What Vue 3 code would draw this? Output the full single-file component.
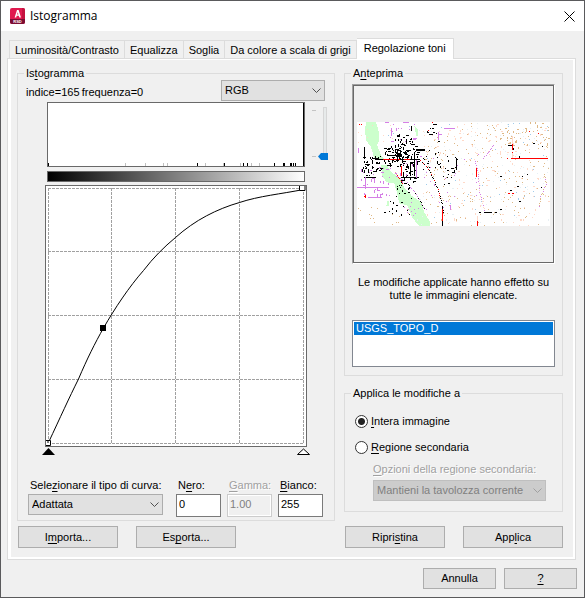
<script setup>
import { ref } from 'vue'

const tabs = ['Luminosità/Contrasto', 'Equalizza', 'Soglia', 'Da colore a scala di grigi', 'Regolazione toni']
const activeTab = ref('Regolazione toni')
const channel = ref('RGB')
const curveType = ref('Adattata')
const black = ref('0')
const gamma = ref('1.00')
const white = ref('255')
const scale = ref(0)
const scope = ref('all')
const palette = ref('Mantieni la tavolozza corrente')

const blackBars = [1, 150, 177, 196, 200, 227, 236, 237, 243, 244, 246, 248]
const grayBars = [77, 97, 115, 119, 157, 175, 192, 195, 203, 211]
const gridLines = [3, 66, 130, 194, 258]

/* Deterministic generator so that the thumbnail is stable between renders */
let seed = 4711
function random() {
  seed = (seed * 16807) % 2147483647
  return seed / 2147483647
}

const colors = {
  black: '#000000',
  red: '#ff0000',
  purple: '#d580e6',
  tan: '#deb887',
  peach: '#ffd9c8',
  blue: '#a0cbea',
  pale: '#e8f0f4',
  green: '#ccffcc'
}

const marks = []
function scatter(color, count, x, y, w, h, longest = 1) {
  for (let i = 0; i < count; i++) {
    const flat = random() > 0.5
    const length = 1 + Math.floor(random() * longest)
    marks.push({
      color,
      x: x + Math.floor(random() * w),
      y: y + Math.floor(random() * h),
      w: flat ? length : 1,
      h: flat ? 1 : length
    })
  }
}
function trail(names, points, step) {
  for (let p = 1; p < points.length; p++) {
    const [x0, y0] = points[p - 1]
    const [x1, y1] = points[p]
    const count = Math.ceil(Math.hypot(x1 - x0, y1 - y0) / step)
    for (let i = 0; i < count; i++) {
      marks.push({
        color: names[Math.floor(random() * names.length)],
        x: Math.round(x0 + ((x1 - x0) * i) / count),
        y: Math.round(y0 + ((y1 - y0) * i) / count),
        w: 1,
        h: 1
      })
    }
  }
}

scatter('pale', 130, 60, 0, 131, 103)
scatter('peach', 150, 66, 0, 125, 103, 2)
scatter('tan', 170, 68, 0, 123, 103)
scatter('tan', 44, 140, 0, 51, 26, 2)
scatter('tan', 22, 68, 20, 22, 36)
scatter('tan', 16, 0, 85, 60, 18)
scatter('peach', 14, 0, 0, 60, 30)
scatter('blue', 40, 68, 0, 122, 96)
scatter('blue', 5, 20, 0, 40, 40)
scatter('purple', 34, 4, 44, 30, 30, 3)
scatter('purple', 12, 32, 2, 28, 18, 3)
scatter('purple', 26, 62, 30, 60, 60)
scatter('purple', 10, 45, 76, 24, 20)
scatter('purple', 14, 36, 40, 26, 20, 2)
scatter('black', 95, 27, 24, 34, 22, 3)
scatter('black', 30, 35, 26, 14, 14, 3)
scatter('black', 26, 38, 12, 18, 14, 3)
scatter('black', 46, 5, 34, 20, 20, 3)
scatter('black', 34, 44, 42, 16, 20, 3)
scatter('black', 12, 70, 0, 14, 20, 2)
scatter('black', 20, 66, 28, 18, 20, 2)
scatter('black', 16, 86, 34, 14, 30, 2)
scatter('black', 14, 30, 74, 26, 20, 2)
scatter('black', 12, 40, 62, 14, 10, 2)
scatter('black', 12, 140, 20, 45, 80, 2)
trail(['black', 'red', 'black'], [[62, 37], [70, 45], [77, 58], [82, 71], [85, 83]], 2)
trail(['purple'], [[135, 23], [130, 30], [124, 37]], 2)
trail(['purple', 'peach'], [[116, 37], [120, 52], [121, 70], [127, 90]], 2)
trail(['black', 'tan'], [[85, 84], [87, 95]], 2)
trail(['black', 'purple'], [[50, 60], [60, 74], [68, 88]], 2)
trail(['tan', 'red'], [[38, 50], [46, 62]], 2)
trail(['tan', 'tan', 'purple'], [[186, 52], [188, 62], [182, 74], [181, 86]], 2)

const lines = [
  ['black', 18, 37, 44, 1], ['red', 26, 37, 17, 1], ['red', 47, 37, 6, 1], ['red', 44, 44, 1, 10],
  ['black', 7, 25, 1, 12], ['black', 59, 27, 9, 2], ['black', 50, 28, 4, 1], ['black', 54, 4, 1, 5],
  ['black', 44, 55, 18, 1], ['black', 7, 55, 12, 1], ['black', 30, 33, 12, 1],
  ['black', 40, 28, 1, 12], ['black', 57, 30, 1, 24], ['black', 53, 40, 1, 14], ['black', 98, 36, 1, 12],
  ['red', 153, 36, 37, 1], ['red', 149, 36, 1, 1], ['red', 154, 22, 1, 6], ['red', 154, 30, 1, 1],
  ['peach', 154, 14, 1, 8], ['peach', 154, 31, 1, 5], ['red', 118, 46, 1, 9], ['red', 119, 98, 1, 6],
  ['peach', 119, 94, 1, 4], ['red', 85, 87, 1, 11], ['black', 85, 98, 1, 6], ['black', 85, 85, 1, 2],
  ['red', 2, 2, 1, 1], ['red', 4, 2, 1, 1], ['red', 7, 74, 2, 1], ['red', 8, 73, 1, 3],
  ['red', 150, 71, 2, 1], ['red', 154, 71, 2, 1], ['red', 171, 9, 1, 1], ['red', 180, 11, 1, 1],
  ['red', 75, 0, 1, 1], ['red', 71, 8, 1, 1], ['black', 121, 90, 2, 1], ['black', 126, 90, 8, 1],
  ['black', 137, 90, 2, 1], ['black', 150, 23, 4, 1], ['black', 27, 90, 2, 1], ['black', 76, 2, 4, 1],
  ['purple', 0, 65, 27, 1], ['purple', 30, 65, 2, 1], ['purple', 11, 75, 14, 1], ['purple', 20, 72, 1, 3],
  ['purple', 59, 38, 1, 18], ['purple', 87, 6, 10, 1], ['purple', 34, 6, 1, 8], ['purple', 46, 0, 6, 1],
  ['purple', 28, 0, 4, 1], ['purple', 8, 55, 1, 12], ['purple', 17, 56, 1, 5], ['purple', 81, 10, 1, 8],
  ['purple', 56, 16, 3, 2], ['purple', 1, 26, 1, 5], ['purple', 93, 83, 1, 5], ['purple', 82, 12, 3, 1]
]
for (const [color, x, y, w, h] of lines) marks.push({ color, x, y, w, h })
</script>

<template>
  <main class="dialog">
    <header class="titlebar">
      <svg class="logo" viewBox="0 0 16 17" aria-hidden="true">
        <rect width="15" height="16" rx="2" fill="#e01a4f" />
        <path d="M0 11H15V14Q15 16 13 16H2Q0 16 0 14Z" fill="#7c0c32" />
        <path d="M12 0H13Q15 0 15 2V11H12Z" fill="#c4123f" />
        <path d="M4.600 9.500L7 2H8.600L11 9.500H9.300L8.800 7.800H6.700L6.200 9.500ZM7.100 6.500H8.400L7.800 4.200Z" fill="#fff" />
        <text x="7.500" y="15" text-anchor="middle" class="logo-text">RSD</text>
      </svg>
      <h1>Istogramma</h1>
      <button class="close" aria-label="Chiudi">
        <svg viewBox="0 0 11 11"><path d="M.5 .5L10.500 10.500M10.500 .5L.5 10.500" stroke="#000" fill="none" /></svg>
      </button>
    </header>

    <nav class="tabs" role="tablist">
      <button
        v-for="tab in tabs"
        :key="tab"
        role="tab"
        :aria-selected="tab === activeTab"
        :class="['tab', { active: tab === activeTab }]"
        @click="activeTab = tab"
      >{{ tab }}</button>
    </nav>

    <section class="panel">
      <div class="column">
        <fieldset class="group histogram">
          <legend>Is<u>t</u>ogramma</legend>
          <div class="head">
            <span>indice=165&thinsp;frequenza=0</span>
            <div class="select channel">
              <select v-model="channel" aria-label="Canale"><option>RGB</option></select>
              <svg viewBox="0 0 9 6"><path d="M.5 .5L4.500 4.500L8.500 .5" /></svg>
            </div>
          </div>
          <div class="levels">
            <svg class="bars" viewBox="0 0 256 63" preserveAspectRatio="none" shape-rendering="crispEdges">
              <rect v-for="x in grayBars" :key="'g' + x" :x="x" y="60" width="1" height="3" fill="#c0c0c0" />
              <rect v-for="x in blackBars" :key="'b' + x" :x="x - 1" y="60" width="1" height="3" fill="#000" />
              <rect x="255" y="0" width="1" height="63" fill="#000" />
            </svg>
            <div class="slider">
              <div class="ticks"><i></i><i></i></div>
              <input v-model="scale" type="range" min="0" max="100" aria-label="Scala istogramma" />
            </div>
          </div>
          <div class="ramp"></div>
          <svg class="curve" viewBox="0 0 262 272">
            <rect x=".5" y=".5" width="261" height="261" fill="#fff" stroke="#696969" />
            <g class="grid">
              <path v-for="p in gridLines" :key="p" :d="`M3 ${p}.5H259M${p}.5 3V259`" />
            </g>
            <path
              d="M3.500 257.500C15 233 24 213 33.500 194C42 174 50 158 58.500 143C70 123 84 102 98.500 85.500C108 73 119 62 130.500 52.500C150 35 172 24 194.500 17.500C214 11 236 9 258.500 4.500"
              fill="none" stroke="#000"
            />
            <rect x="55" y="140" width="6" height="6" />
            <path d="M1 255.500H5.500V260.500H1M254.500 1V5.500H260V1" fill="#fff" stroke="#000" />
            <path d="M3 256V258" stroke="#000" />
            <path d="M3.500 263L10 270H-3Z" />
            <path d="M258.500 264L264.500 269.500H252.500Z" fill="#fff" stroke="#000" />
          </svg>
          <div class="settings">
            <div class="field type">
              <label for="curve-type">Sele<u>z</u>ionare il tipo di curva:</label>
              <div class="select">
                <select id="curve-type" v-model="curveType"><option>Adattata</option></select>
                <svg viewBox="0 0 9 6"><path d="M.5 .5L4.500 4.500L8.500 .5" /></svg>
              </div>
            </div>
            <div class="field">
              <label for="black">N<u>e</u>ro:</label>
              <input id="black" v-model="black" type="text" />
            </div>
            <div class="field">
              <label for="gamma" class="off"><u>G</u>amma:</label>
              <input id="gamma" v-model="gamma" type="text" disabled />
            </div>
            <div class="field">
              <label for="white"><u>B</u>ianco:</label>
              <input id="white" v-model="white" type="text" />
            </div>
          </div>
        </fieldset>
        <div class="buttons">
          <button class="push">I<u>m</u>porta...</button>
          <button class="push">Es<u>p</u>orta...</button>
        </div>
      </div>

      <div class="column">
        <fieldset class="group preview">
          <legend>A<u>n</u>teprima</legend>
          <div class="frame">
            <svg class="map" viewBox="0 0 192 104" shape-rendering="crispEdges">
              <rect width="192" height="104" fill="#fff" />
              <g fill="#ccffcc">
                <path d="M9 0H19L22 11V18L20 23L24 33L27 37L17 36L14 25L9 18L8 8Z" />
                <path d="M24 43H30L34 50L42 55L47 65L54 73L64 80L67 90L73 100L72 104H62L55 95L50 83L42 81L40 71L37 61L29 60L25 53Z" />
                <path d="M57 4L61 8V14H59ZM30 79H32V84H29Z" />
              </g>
              <rect
                v-for="(m, i) in marks"
                :key="i"
                :x="m.x" :y="m.y" :width="m.w" :height="m.h"
                :fill="colors[m.color]"
              />
            </svg>
          </div>
          <p class="note">Le modifiche applicate hanno effetto su tutte le immagini elencate.</p>
          <ul class="list" role="listbox" aria-label="Immagini">
            <li role="option" aria-selected="true">USGS_TOPO_D</li>
          </ul>
        </fieldset>

        <fieldset class="group scope">
          <legend>Applica le modifiche a</legend>
          <label class="radio"><input v-model="scope" type="radio" name="scope" value="all" /><span><u>I</u>ntera immagine</span></label>
          <label class="radio"><input v-model="scope" type="radio" name="scope" value="part" /><span><u>R</u>egione secondaria</span></label>
          <div class="sub">
            <label for="palette" class="off"><u>O</u>pzioni della regione secondaria:</label>
            <div class="select disabled">
              <select id="palette" v-model="palette" disabled><option>Mantieni la tavolozza corrente</option></select>
              <svg viewBox="0 0 9 6"><path d="M.5 .5L4.500 4.500L8.500 .5" /></svg>
            </div>
          </div>
        </fieldset>
        <div class="buttons">
          <button class="push">Ripri<u>s</u>tina</button>
          <button class="push">App<u>l</u>ica</button>
        </div>
      </div>
    </section>

    <footer class="footer">
      <button class="push">Annulla</button>
      <button class="push"><u>?</u></button>
    </footer>
  </main>
</template>

<style>
body {
  background: #f0f0f0;
}
</style>

<style scoped>
.dialog,
.dialog * {
  box-sizing: border-box;
}
.dialog {
  display: flex;
  flex-direction: column;
  min-height: 100vh;
  border: 1px solid #5a5a5c;
  background: #f0f0f0;
  color: #000;
  font: 11px/13px "Liberation Sans", Arial, sans-serif;
}
button,
input,
select {
  margin: 0;
  border-radius: 0;
  color: inherit;
  font: inherit;
}
u {
  text-underline-offset: 2px;
  text-decoration-thickness: 1px;
  text-decoration-skip-ink: none;
}
.titlebar {
  display: flex;
  align-items: center;
  height: 30px;
  padding: 0 9px;
  background: #fff;
}
.logo {
  width: 16px;
  height: 17px;
}
.logo-text {
  fill: #fff;
  font: bold 4px "Liberation Sans", sans-serif;
}
h1 {
  flex: 1;
  margin: 0 0 0 4px;
  font: 12px/16px "Open Sans", "Noto Sans", sans-serif;
}
.close {
  display: flex;
  padding: 0;
  border: 0;
  background: none;
}
.close svg {
  width: 11px;
  height: 11px;
}
.tabs {
  display: flex;
  align-items: flex-end;
  margin: 7px 8px 0;
}
.tab {
  height: 18px;
  padding: 1px 5px 0;
  border: 1px solid #dcdcdc;
  border-width: 1px 1px 0 0;
  background: #f0f0f0;
  white-space: nowrap;
}
.tab:first-child {
  border-left-width: 1px;
}
.tab.active {
  position: relative;
  height: 21px;
  margin-bottom: -1px;
  padding: 0 7px 1px;
  background: #fff;
}
.panel {
  display: grid;
  grid-template-columns: 318fr 219fr;
  gap: 9px;
  margin: 0 8px 0 6px;
  padding: 8px 12px 11px 9px;
  border: 1px solid #dcdcdc;
  box-shadow: inset 3px 1px #fff, inset -2px -2px #fff;
}
.column {
  display: flex;
  flex-direction: column;
  min-width: 0;
}
.group {
  min-width: 0;
  margin: 0;
  padding: 0;
  border: 1px solid #dcdcdc;
}
legend {
  margin-left: 6px;
  padding: 0 2px;
}
.preview legend {
  margin-left: -1px;
}
.scope legend {
  margin-left: -4px;
}
.head {
  display: flex;
  justify-content: space-between;
  align-items: center;
  height: 21px;
  padding: 0 9px 0 8px;
}
.head span {
  padding-top: 4px;
}
.select {
  display: grid;
  align-items: center;
}
.select > * {
  grid-area: 1 / 1;
}
.select select {
  width: 100%;
  height: 21px;
  padding: 0 18px 0 3px;
  border: 1px solid #adadad;
  background: #e1e1e1;
  appearance: none;
}
.select svg {
  justify-self: end;
  width: 9px;
  height: 6px;
  margin-right: 4px;
  fill: none;
  stroke: #505050;
  pointer-events: none;
}
.channel {
  width: 104px;
}
.select.disabled select {
  border-color: #bfbfbf;
  background: #cccccc;
  color: #808080;
  opacity: 1;
}
.select.disabled svg {
  stroke: #a0a0a0;
}
.levels {
  display: grid;
  grid-template-columns: 1fr 29px;
  margin-top: 1px;
  padding-left: 29px;
}
.bars {
  width: 100%;
  height: 65px;
  border: 1px solid #696969;
  background: #fff;
}
.slider {
  display: flex;
  gap: 2px;
  padding: 5px 0 0 7px;
}
.ticks {
  display: flex;
  flex-direction: column;
  justify-content: space-between;
  width: 4px;
  height: 50px;
  padding-top: 3px;
}
.ticks i {
  height: 1px;
  background: #c4c4c4;
}
.slider input {
  width: 10px;
  height: 53px;
  background:
    linear-gradient(#e7eaea, #e7eaea) 6px 1px / 2px 48px no-repeat,
    linear-gradient(#d6d6d6, #d6d6d6) 5px 0 / 4px 50px no-repeat;
  appearance: none;
  writing-mode: vertical-lr;
  direction: rtl;
}
.slider input::-webkit-slider-thumb {
  width: 10px;
  height: 7px;
  background: #0078d7;
  appearance: none;
  clip-path: polygon(0 50%, 30% 0, 100% 0, 100% 100%, 30% 100%);
}
.ramp {
  height: 11px;
  margin: 4px 29px 3px;
  border: 1px solid #696969;
  background: linear-gradient(to right, #000, #fff);
}
.curve {
  display: block;
  width: calc(100% - 54px);
  margin: 0 27px;
  overflow: visible;
}
.grid {
  fill: none;
  stroke: #a0a0a0;
  stroke-dasharray: 3 1;
}
.settings {
  display: flex;
  gap: 6px;
  margin-top: 22px;
  padding: 0 11px 3px 10px;
}
.field {
  display: flex;
  flex-direction: column;
  gap: 2px;
  width: 45px;
}
.field.type {
  flex: 1;
  margin-right: 7px;
}
.field label {
  padding-left: 2px;
  white-space: nowrap;
}
.off {
  color: #a0a0a0;
  text-shadow: 1px 1px #fff;
}
.field input {
  width: 100%;
  height: 23px;
  padding: 0 2px 3px;
  border: 1px solid #7a7a7a;
  background: #fff;
}
.field input:disabled {
  border-color: #cccccc;
  background: #f0f0f0;
  box-shadow: inset 0 0 0 1px #fff;
  color: #808080;
}
.buttons {
  display: flex;
  gap: 18px;
  margin-top: auto;
  padding-left: 1px;
}
.push {
  width: 100px;
  height: 22px;
  padding: 0;
  border: 1px solid #adadad;
  background: #e1e1e1;
}
.histogram {
  margin-bottom: 5px;
}
.preview {
  padding: 0 7px 8px 7px;
}
.frame {
  display: flex;
  align-items: center;
  height: 180px;
  margin-top: 4px;
  padding: 0 4px;
  border: 1px solid #a0a0a0;
  border-right-color: #fff;
  border-bottom-color: #fff;
  box-shadow: inset 0 0 0 1px #696969;
}
.map {
  width: 100%;
}
.note {
  margin: 12px 0 18px;
  text-align: center;
}
.list {
  height: 47px;
  margin: 0;
  padding: 1px;
  border: 1px solid #828790;
  background: #fff;
  list-style: none;
}
.list li {
  padding: 0 2px;
  background: #0078d7;
  color: #fff;
}
.scope {
  margin-top: 11px;
  padding: 0 16px 10px 10px;
}
.radio {
  display: flex;
  align-items: center;
  gap: 3px;
  height: 26px;
}
.radio:first-of-type {
  margin-top: 8px;
}
.radio input {
  width: 13px;
  height: 13px;
  border: 1px solid #333;
  border-radius: 50%;
  background: #fff;
  appearance: none;
}
.radio input:checked {
  background: radial-gradient(circle, #222 3px, #fff 4px);
}
.sub {
  display: flex;
  flex-direction: column;
  gap: 4px;
  margin-top: 3px;
  padding-left: 18px;
}
.sub label {
  white-space: nowrap;
}
.footer {
  display: flex;
  justify-content: flex-end;
  gap: 8px;
  margin-top: 8px;
  padding: 0 7px 8px 0;
}
.footer .push {
  width: 73px;
  height: 21px;
}
</style>
